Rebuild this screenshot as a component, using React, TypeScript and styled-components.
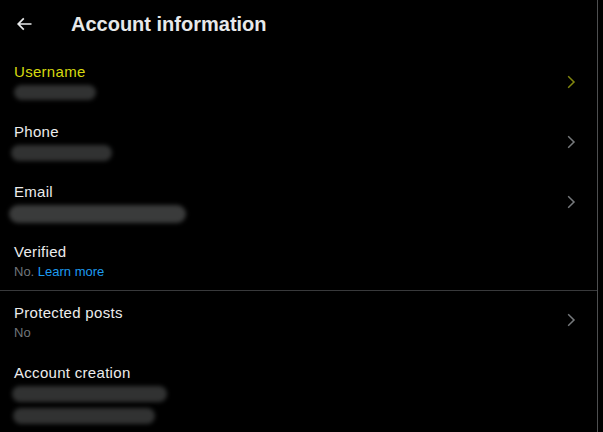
import React from "react";
import styled, { createGlobalStyle } from "styled-components";

const Global = createGlobalStyle`
  html, body { margin: 0; padding: 0; background: #000; }
  body { font-family: "Liberation Sans", Arial, sans-serif; -webkit-font-smoothing: antialiased; }
  * { box-sizing: border-box; }
`;

const Page = styled.div`
  width: 598px;
  height: 432px;
  background: #000;
  border-right: 1px solid #4e4f50;
  overflow: hidden;
`;

const Header = styled.div`
  height: 53px;
  display: flex;
  align-items: center;
  padding-left: 14px;
`;

const BackButton = styled.div`
  width: 20px;
  height: 20px;
  margin-top: -5px;
  display: flex;
  color: #e7e9ea;
`;

const Title = styled.h2`
  margin: 0 0 0 37px;
  font-size: 20px;
  font-weight: 700;
  line-height: 24px;
  color: #e7e9ea;
  margin-top: -6px;
`;

const Row = styled.div<{ $pt?: number; $h: number }>`
  height: ${(p) => p.$h}px;
  display: flex;
  align-items: flex-start;
  padding: ${(p) => p.$pt ?? 9}px 17px 0 14px;
  position: relative;
`;

const Content = styled.div`
  flex: 1;
  display: flex;
  flex-direction: column;
`;

const Label = styled.div<{ $accent?: boolean }>`
  font-size: 15px;
  line-height: 20px;
  letter-spacing: 0.3px;
  color: ${(p) => (p.$accent ? "#d6d90f" : "#ececec")};
`;

const Secondary = styled.div`
  font-size: 13px;
  line-height: 20px;
  color: #71767b;
`;

const Link = styled.span`
  color: #1d9bf0;
`;

const Blur = styled.div<{ $w: number; $dx: number; $h?: number; $mt?: number; $tone?: string }>`
  width: ${(p) => p.$w}px;
  height: ${(p) => p.$h ?? 15}px;
  margin-left: ${(p) => p.$dx}px;
  margin-top: ${(p) => p.$mt ?? 3}px;
  border-radius: 9px;
  background: ${(p) => p.$tone ?? "#313232"};
  filter: blur(2.2px);
`;

const ChevronWrap = styled.div<{ $color: string }>`
  position: absolute;
  right: 17px;
  top: 50%;
  width: 18px;
  height: 18px;
  margin-top: -10px;
  color: ${(p) => p.$color};
  display: flex;
`;

const Divider = styled.div`
  height: 1px;
  background: #38393b;
`;

const Chevron = ({ color }: { color: string }) => (
  <ChevronWrap $color={color}>
    <svg viewBox="0 0 24 24" width="18" height="18" fill="currentColor">
      <path d="M14.586 12L7.543 4.96l1.414-1.42L17.414 12l-8.457 8.46-1.414-1.42L14.586 12z" />
    </svg>
  </ChevronWrap>
);

export default function App() {
  return (
    <>
      <Global />
      <Page>
        <Header>
          <BackButton>
            <svg viewBox="0 0 24 24" width="20" height="20" fill="currentColor">
              <path d="M7.414 13l5.043 5.04-1.414 1.42L3.586 12l7.457-7.46 1.414 1.42L7.414 11H21v2H7.414z" />
            </svg>
          </BackButton>
          <Title>Account information</Title>
        </Header>

        <Row $h={60}>
          <Content>
            <Label $accent>Username</Label>
            <Blur $w={82} $dx={0} />
          </Content>
          <Chevron color="#82870e" />
        </Row>

        <Row $h={60}>
          <Content>
            <Label>Phone</Label>
            <Blur $w={101} $dx={-3} $h={16} />
          </Content>
          <Chevron color="#76797c" />
        </Row>

        <Row $h={60}>
          <Content>
            <Label>Email</Label>
            <Blur $w={177} $dx={-5} $h={18} $tone="#3a3b3b" />
          </Content>
          <Chevron color="#76797c" />
        </Row>

        <Row $h={57}>
          <Content>
            <Label>Verified</Label>
            <Secondary>
              No. <Link>Learn more</Link>
            </Secondary>
          </Content>
        </Row>

        <Divider />

        <Row $h={60} $pt={12}>
          <Content>
            <Label>Protected posts</Label>
            <Secondary>No</Secondary>
          </Content>
          <Chevron color="#76797c" />
        </Row>

        <Row $h={80} $pt={12}>
          <Content>
            <Label>Account creation</Label>
            <Blur $w={155} $dx={-2} $h={16} $mt={3} />
            <Blur $w={142} $dx={-1} $h={16} $mt={6} />
          </Content>
        </Row>
      </Page>
    </>
  );
}
